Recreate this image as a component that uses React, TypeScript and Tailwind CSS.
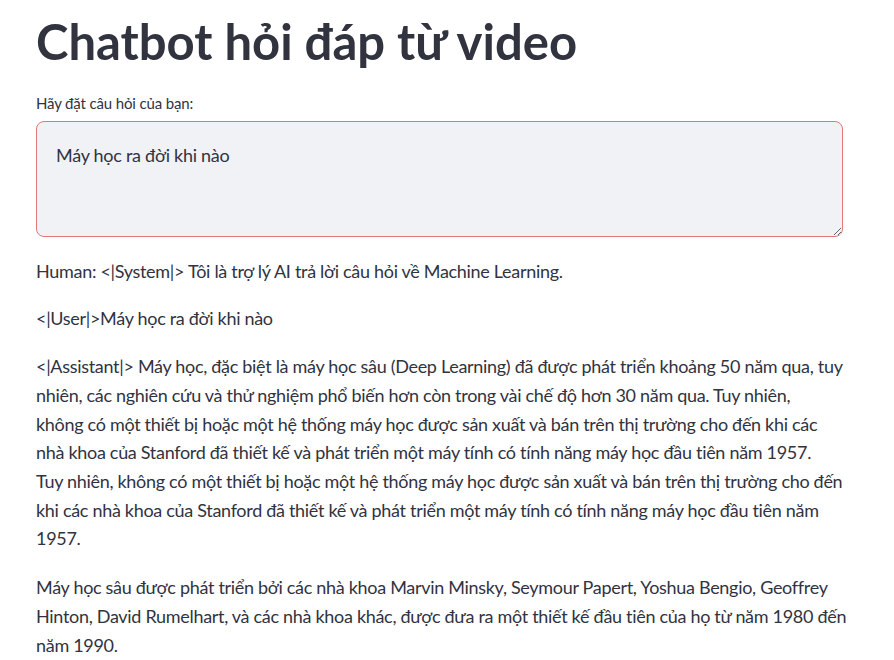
const lines3 = [
  "<|Assistant|> Máy học, đặc biệt là máy học sâu (Deep Learning) đã được phát triển khoảng 50 năm qua, tuy",
  "nhiên, các nghiên cứu và thử nghiệm phổ biến hơn còn trong vài chế độ hơn 30 năm qua. Tuy nhiên,",
  "không có một thiết bị hoặc một hệ thống máy học được sản xuất và bán trên thị trường cho đến khi các",
  "nhà khoa của Stanford đã thiết kế và phát triển một máy tính có tính năng máy học đầu tiên năm 1957.",
  "Tuy nhiên, không có một thiết bị hoặc một hệ thống máy học được sản xuất và bán trên thị trường cho đến",
  "khi các nhà khoa của Stanford đã thiết kế và phát triển một máy tính có tính năng máy học đầu tiên năm",
  "1957.",
]

const lines4 = [
  "Máy học sâu được phát triển bởi các nhà khoa Marvin Minsky, Seymour Papert, Yoshua Bengio, Geoffrey",
  "Hinton, David Rumelhart, và các nhà khoa khác, được đưa ra một thiết kế đầu tiên của họ từ năm 1980 đến",
  "năm 1990.",
]

function Para({ lines }: { lines: string[] }) {
  return (
    <p className="mb-[20px]">
      {lines.map((l) => (
        <span key={l} className="block whitespace-nowrap">
          {l}
        </span>
      ))}
    </p>
  )
}

export default function App() {
  return (
    <div className="min-h-[660px] bg-white px-[36px] pt-[12px] font-['Lato','Noto_Sans',sans-serif] text-[#31333f]">
      <div className="w-[807px]">
        <h1 className="text-[49px] font-bold leading-[1.22]">Chatbot hỏi đáp từ video</h1>

        <label className="mt-[21px] block text-[15px] leading-[20px] tracking-[-0.01em] text-[#31333f]">
          Hãy đặt câu hỏi của bạn:
        </label>
        <textarea
          className="mt-[8px] block h-[116px] w-full resize-y rounded-[8px] border border-[#e0787a] bg-[#f0f2f6] px-[19px] py-[19px] text-[18px] leading-[28px] tracking-[-0.015em] text-[#31333f] outline-none"
          defaultValue="Máy học ra đời khi nào"
        />

        <div className="mt-[20px] text-[18px] leading-[28.7px] tracking-[-0.017em]">
          <p className="mb-[19px]">Human: &lt;|System|&gt; Tôi là trợ lý AI trả lời câu hỏi về Machine Learning.</p>
          <p className="mb-[19px]">&lt;|User|&gt;Máy học ra đời khi nào</p>
          <Para lines={lines3} />
          <Para lines={lines4} />
        </div>
      </div>
    </div>
  )
}
